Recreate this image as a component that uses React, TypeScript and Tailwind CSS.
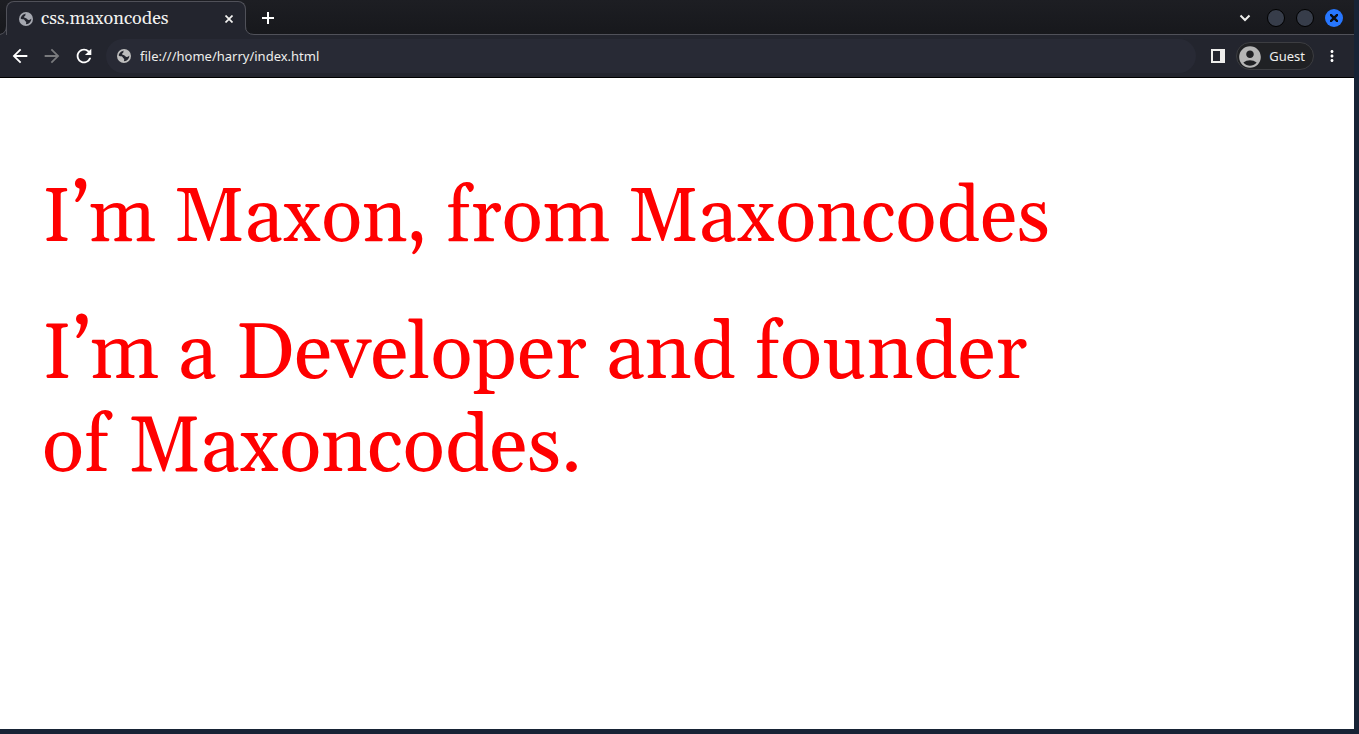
import React from "react";
import {
  MdAccountCircle,
  MdArrowBack,
  MdArrowForward,
  MdMoreVert,
  MdRefresh,
} from "react-icons/md";

function Globe({ className }: { className: string }) {
  return (
    <svg className={className} viewBox="0 0 16 16" aria-hidden="true">
      <circle cx="8" cy="8" r="7" fill="currentColor" />
      <path
        d="M8.500 2.800C6.500 3 8.200 4.300 6.800 5 5.600 5.600 6 6.800 7.500 7 9.300 7.200 9 9 11 9 12.200 9 12.500 8 13.300 7.800 13.300 10.500 11.300 13 8.300 13.300 7.300 12.500 9 11.500 7.800 10.600 6.500 10 7 8.700 5.500 8.300 4.500 8 3.500 8.500 2.700 7.500 2.900 5 5.500 2.700 8.500 2.800Z"
        fill="#23252e"
      />
    </svg>
  );
}

function TabStrip() {
  return (
    <div className="flex h-[35px] items-end bg-linear-to-b from-[#1d1e23] to-[#17181c]">
      <svg className="h-[35px] w-[6px] shrink-0" viewBox="0 0 6 35" aria-hidden="true">
        <path d="M0 35V34Q6 33 6 26V35Z" fill="#23252e" />
        <path d="M0 34.500Q6.500 33 6.500 26" fill="none" stroke="#505159" />
      </svg>
      <div className="flex h-[34px] w-60 items-center rounded-t-lg border-x border-t border-[#505159] bg-[#23252e] pl-[11px] pr-2">
        <Globe className="size-4 shrink-0 text-[#a5a8b0]" />
        <span className="ml-[7px] flex-1 whitespace-nowrap font-['Gelasio','Georgia','Liberation_Serif',serif] text-[18px] leading-6 text-[#f2f2f0]">
          css.maxoncodes
        </span>
        <button aria-label="Close tab" className="flex size-4 items-center justify-center text-[#f2f2f0]">
          <svg className="size-2" viewBox="0 0 8 8" stroke="currentColor" strokeWidth="1.700" aria-hidden="true">
            <path d="M.5.5 7.500 7.500M7.500.5.5 7.500" />
          </svg>
        </button>
      </div>
      <svg className="-ml-px h-[35px] w-[9px] shrink-0" viewBox="0 0 9 35" aria-hidden="true">
        <path d="M0 35V26Q0 34 9 34V35Z" fill="#23252e" />
        <path d="M.5 26Q.5 34.500 9 34.500" fill="none" stroke="#505159" />
      </svg>
      <div className="flex h-[35px] flex-1 items-center border-b border-[#505159]">
        <button aria-label="New tab" className="ml-1 flex size-5 items-center justify-center pt-px text-white">
          <svg className="size-3" viewBox="0 0 12 12" stroke="currentColor" strokeWidth="2" aria-hidden="true">
            <path d="M6 0V12M0 6H12" />
          </svg>
        </button>
        <div className="ml-auto mr-[11px] flex items-center pt-0.5">
          <button aria-label="Search tabs" className="flex size-5 items-center justify-center">
            <svg className="size-3" viewBox="0 0 12 12" fill="none" stroke="#eeeeec" strokeWidth="2" aria-hidden="true">
              <path d="M1.500 3.500 6 8 10.500 3.500" />
            </svg>
          </button>
          <div className="ml-3 flex gap-[11px]">
            <button aria-label="Minimize" className="size-[18px] rounded-full border border-black bg-[#373d4a]" />
            <button aria-label="Maximize" className="size-[18px] rounded-full border border-black bg-[#373d4a]" />
            <button
              aria-label="Close window"
              className="flex size-[18px] items-center justify-center rounded-full bg-[#2777ff]"
            >
              <svg className="size-2" viewBox="0 0 8 8" stroke="#0b0d12" strokeWidth="2.400" aria-hidden="true">
                <path d="M0 0 8 8M8 0 0 8" />
              </svg>
            </button>
          </div>
        </div>
      </div>
    </div>
  );
}

function Toolbar() {
  return (
    <div className="flex h-[43px] items-center border-b border-black bg-[#23252e] pl-2.5 pr-3 font-['Noto_Sans',sans-serif] text-[13px]">
      <div className="flex gap-3 text-white">
        <button aria-label="Back" className="flex size-5 items-center justify-center">
          <MdArrowBack className="size-[22px] shrink-0" />
        </button>
        <button aria-label="Forward" disabled className="flex size-5 items-center justify-center text-[#797a7d]">
          <MdArrowForward className="size-[22px] shrink-0" />
        </button>
        <button aria-label="Reload" className="flex size-5 items-center justify-center">
          <MdRefresh className="size-[22px] shrink-0" />
        </button>
      </div>
      <label className="ml-3 flex h-[34px] flex-1 items-center rounded-full bg-[#282a35] pl-2.5">
        <Globe className="size-4 text-[#bdbdbd]" />
        <input
          aria-label="Address"
          className="ml-2 min-w-0 flex-1 bg-transparent pt-px text-[#eeeeec] outline-none"
          defaultValue="file:///home/harry/index.html"
        />
      </label>
      <button aria-label="Side panel" className="ml-3 flex size-5 items-center justify-center">
        <svg className="size-3.5" viewBox="0 0 14 14" aria-hidden="true">
          <path d="M0 0H14V14H0ZM2 2V12H9V2Z" fill="#eeeeec" fillRule="evenodd" />
        </svg>
      </button>
      <button className="ml-2 flex h-7 items-center gap-1.5 rounded-full border border-[#3c3d41] bg-[#202124] pr-2 pt-px text-[#eeeeec]">
        <MdAccountCircle className="size-[26px] text-[#b5b5b5]" />
        Guest
      </button>
      <button aria-label="Menu" className="ml-2 flex size-5 items-center justify-center text-white">
        <MdMoreVert className="size-[18px]" />
      </button>
    </div>
  );
}

export default function App() {
  return (
    <div className="flex min-h-screen flex-col bg-[#172335] pb-[5px] pr-[5px]">
      <header>
        <TabStrip />
        <Toolbar />
      </header>
      <main className="flex-1 bg-white px-[42px] pt-[94px] font-['Gelasio','Georgia','Liberation_Serif',serif] text-[#ff0000]">
        <h1 className="text-[76px] leading-[93px]">I’m Maxon, from Maxoncodes</h1>
        <p className="mt-11 max-w-5xl text-[78px] leading-[93px]">
          I’m a Developer and founder of Maxoncodes.
        </p>
      </main>
    </div>
  );
}
